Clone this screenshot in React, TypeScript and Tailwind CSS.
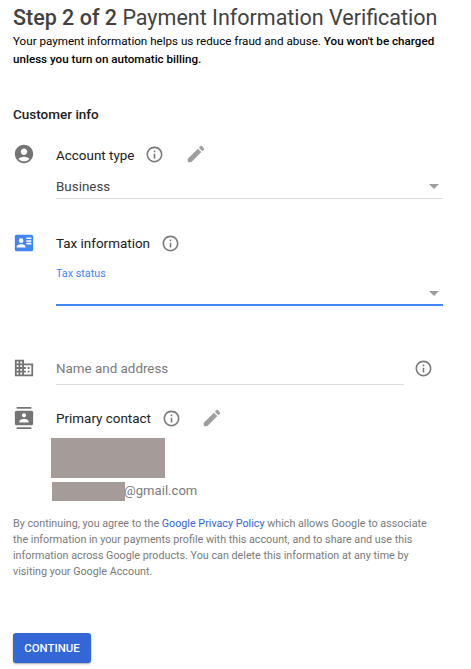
import React from "react";
import { MdAccountCircle, MdContacts, MdDomain, MdEdit, MdInfoOutline } from "react-icons/md";

function CardIcon() {
  return (
    <svg width="22" height="22" viewBox="0 0 24 24" className="text-[#4285f4]">
      <path
        fill="currentColor"
        fillRule="evenodd"
        d="M4 3h16a2 2 0 0 1 2 2v14a2 2 0 0 1-2 2H4a2 2 0 0 1-2-2V5c0-1.100.9-2 2-2zM14.500 6v1.700h5.500V6zM14.500 8.900v1.700h5.500V8.900zM14.500 11.800v1.700h5.500V11.800zM8.800 6.900a2.600 2.600 0 1 0 0 5.200 2.600 2.600 0 0 0 0-5.200zM4 16.800h9.600v-1c0-1.700-3.200-2.500-4.800-2.500s-4.800.8-4.800 2.500z"
      />
    </svg>
  );
}

function Info({ className = "" }: { className?: string }) {
  return <MdInfoOutline size={19} className={"shrink-0 text-[#7a7a7a] " + className} />;
}

function Arrow() {
  return <span className="mr-1 border-x-5 border-t-5 border-x-transparent border-t-[#9e9e9e]" />;
}

function Row({ icon, children, className }: { icon: React.ReactNode; children: React.ReactNode; className: string }) {
  return (
    <div className={"flex h-6 items-center text-[#757575] " + className}>
      <span className="flex w-[43px] shrink-0">{icon}</span>
      {children}
    </div>
  );
}

export default function App() {
  return (
    <main className="h-[669px] w-[471px] overflow-hidden bg-white pl-[13px] font-[Roboto,sans-serif] text-[#212121]">
      <h1 className="whitespace-nowrap pt-[3px] text-[21.500px] leading-[30px] text-[#424242]">
        <span className="font-medium">Step 2 of 2</span> Payment Information Verification
      </h1>
      <p className="-mt-px whitespace-nowrap text-[11.640px] leading-[18px] text-black">
        Your payment information helps us reduce fraud and abuse. <b className="font-medium">You won't be charged</b>
        <br />
        <b className="font-medium">unless you turn on automatic billing.</b>
      </p>
      <h2 className="mt-[37px] text-[13.500px] font-medium leading-[18px]">Customer info</h2>

      <Row icon={<MdAccountCircle size={22} />} className="mt-[19px]">
        <span className="pt-[4px] text-[13.450px] text-[#212121]">Account type</span>
        <Info className="ml-[11px]" />
        <MdEdit size={22} className="ml-[21px] text-[#9e9e9e]" />
      </Row>
      <div className="ml-[43px] mt-[8px] flex h-[25px] w-[387px] items-center justify-between border-b border-[#dedede]">
        <span className="pt-[2px] text-[13.400px] text-[#424242]">Business</span>
        <Arrow />
      </div>

      <Row icon={<CardIcon />} className="mt-[32px]">
        <span className="pt-[2px] text-[13.450px] text-[#212121]">Tax information</span>
        <Info className="ml-[11px]" />
      </Row>
      <div className="ml-[43px] mt-[10px] h-[41px] w-[387px] border-b-2 border-[#4285f4]">
        <div className="pt-px text-[10.800px] leading-4 text-[#4285f4]">Tax status</div>
        <div className="mt-[9px] flex justify-end">
          <Arrow />
        </div>
      </div>

      <Row icon={<MdDomain size={22} />} className="mt-[50px]">
        <span className="w-[348px] pt-[2px] text-[13.400px] text-[#7a7a7a]">Name and address</span>
        <Info className="ml-[10px]" />
      </Row>
      <div className="ml-[43px] mt-[4px] w-[348px] border-t border-[#dedede]" />

      <Row icon={<MdContacts size={22} />} className="mt-[21px]">
        <span className="pt-[2px] text-[13.450px] text-[#212121]">Primary contact</span>
        <Info className="ml-[11px]" />
        <MdEdit size={22} className="ml-[20px] text-[#9e9e9e]" />
      </Row>
      <div className="ml-[38px] mt-[8px] h-[40px] w-[114px] bg-[#a59b99]" />
      <div className="ml-[39px] mt-[4px] flex h-[19px] items-center">
        <span className="h-[19px] w-[73px] bg-[#a59b99]" />
        <span className="-ml-px pb-[2px] text-[13.100px] text-[#7a7a7a]">@gmail.com</span>
      </div>

      <p className="mt-[15px] whitespace-nowrap text-[10.750px] leading-4 text-[#7a7a7a]">
        By continuing, you agree to the <a className="text-[#3367d6]">Google Privacy Policy</a> which allows Google to associate
        <br />
        the information in your payments profile with this account, and to share and use this
        <br />
        information across Google products. You can delete this information at any time by
        <br />
        visiting your Google Account.
      </p>
      <button className="mt-[53px] block h-[30px] w-[78px] rounded-[3px] bg-[#3367d6] pt-px text-[11.400px] font-medium text-white shadow-[0_1px_2px_rgba(0,0,0,0.35)]">
        CONTINUE
      </button>
    </main>
  );
}
